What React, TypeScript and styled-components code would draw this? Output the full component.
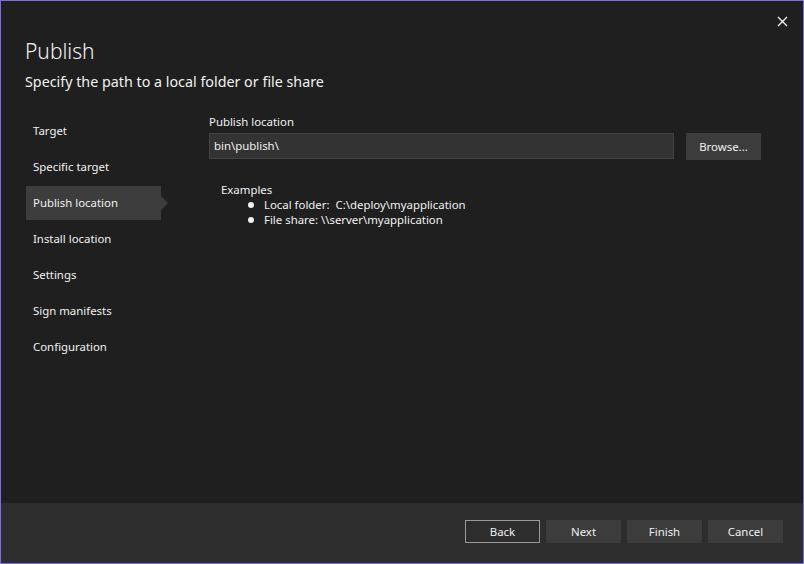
import styled, { createGlobalStyle } from "styled-components";

const GlobalStyle = createGlobalStyle`
  html, body {
    margin: 0;
    padding: 0;
    background: #1f1f1f;
  }
  * {
    box-sizing: border-box;
  }
`;

const Window = styled.div`
  position: relative;
  width: 804px;
  height: 564px;
  border: 1px solid #7a6ee6;
  background: #1f1f1f;
  color: #f1f1f1;
  font-family: "Noto Sans", "Open Sans", sans-serif;
  display: flex;
  flex-direction: column;
`;

const CloseButton = styled.button`
  position: absolute;
  top: 10px;
  right: 8px;
  width: 26px;
  height: 20px;
  padding: 0;
  border: none;
  background: none;
  color: #f1f1f1;
  display: flex;
  align-items: center;
  justify-content: center;
  cursor: pointer;
`;

const Header = styled.div`
  padding: 35px 24px 0;
`;

const Title = styled.h1`
  margin: 0;
  font-size: 21px;
  line-height: 30px;
  font-weight: 300;
`;

const Subtitle = styled.div`
  margin-top: 6px;
  font-size: 14.3px;
  line-height: 20px;
`;

const Body = styled.div`
  flex: 1;
  display: flex;
  padding: 22px 0 0 25px;
  gap: 48px;
`;

const Nav = styled.ul`
  margin: 0;
  padding: 0;
  list-style: none;
  width: 135px;
  display: flex;
  flex-direction: column;
  gap: 2px;
`;

const NavItem = styled.li<{ $active?: boolean }>`
  position: relative;
  height: 34px;
  padding: 0 0 2px 7px;
  display: flex;
  align-items: center;
  font-size: 11.4px;
  background: ${(p) => (p.$active ? "#3d3d3d" : "transparent")};

  &::after {
    content: "";
    display: ${(p) => (p.$active ? "block" : "none")};
    position: absolute;
    right: -7px;
    top: 10px;
    border-top: 7px solid transparent;
    border-bottom: 7px solid transparent;
    border-left: 7px solid #3d3d3d;
  }
`;

const Content = styled.div`
  display: flex;
  flex-direction: column;
`;

const FieldLabel = styled.div`
  font-size: 11.4px;
  line-height: 16px;
  margin-bottom: 3px;
`;

const FieldRow = styled.div`
  display: flex;
  gap: 12px;
`;

const PathInput = styled.input`
  width: 465px;
  height: 26px;
  padding: 0 4px 1px;
  border: 1px solid #434343;
  background: #333333;
  color: #f1f1f1;
  font-family: inherit;
  font-size: 11.4px;
  outline: none;
`;

const Button = styled.button<{ $outlined?: boolean }>`
  width: 75px;
  height: 23px;
  border: 1px solid ${(p) => (p.$outlined ? "#9a9a9a" : "#3c3c3c")};
  background: ${(p) => (p.$outlined ? "transparent" : "#3c3c3c")};
  color: #f1f1f1;
  font-family: inherit;
  font-size: 11.4px;
  padding: 0 0 1px;
  cursor: pointer;
`;

const BrowseButton = styled(Button)`
  height: 27px;
`;

const Examples = styled.div`
  margin: 22px 0 0 12px;
  font-size: 11.4px;
  line-height: 15px;
`;

const ExampleList = styled.ul`
  margin: 0;
  padding: 0 0 0 27px;
  list-style: none;
`;

const ExampleItem = styled.li`
  display: flex;
  align-items: center;
  height: 15px;
  white-space: pre;

  &::before {
    content: "";
    width: 6px;
    height: 6px;
    border-radius: 50%;
    background: #f1f1f1;
    margin-right: 10px;
  }
`;

const Footer = styled.div`
  height: 60px;
  background: #2d2d2d;
  display: flex;
  justify-content: flex-end;
  gap: 6px;
  padding: 17px 20px 0 0;
`;

const navItems = [
  "Target",
  "Specific target",
  "Publish location",
  "Install location",
  "Settings",
  "Sign manifests",
  "Configuration",
];

export default function App() {
  return (
    <>
      <GlobalStyle />
      <Window>
        <CloseButton aria-label="Close">
          <svg width="11" height="11" viewBox="0 0 11 11">
            <path d="M1 1 L10 10 M10 1 L1 10" stroke="#f1f1f1" strokeWidth="1.4" />
          </svg>
        </CloseButton>
        <Header>
          <Title>Publish</Title>
          <Subtitle>Specify the path to a local folder or file share</Subtitle>
        </Header>
        <Body>
          <Nav>
            {navItems.map((item) => (
              <NavItem key={item} $active={item === "Publish location"}>
                {item}
              </NavItem>
            ))}
          </Nav>
          <Content>
            <FieldLabel>Publish location</FieldLabel>
            <FieldRow>
              <PathInput defaultValue="bin\publish\" />
              <BrowseButton>Browse...</BrowseButton>
            </FieldRow>
            <Examples>
              Examples
              <ExampleList>
                <ExampleItem>{"Local folder:  C:\\deploy\\myapplication"}</ExampleItem>
                <ExampleItem>{"File share: \\\\server\\myapplication"}</ExampleItem>
              </ExampleList>
            </Examples>
          </Content>
        </Body>
        <Footer>
          <Button $outlined>Back</Button>
          <Button>Next</Button>
          <Button>Finish</Button>
          <Button>Cancel</Button>
        </Footer>
      </Window>
    </>
  );
}
